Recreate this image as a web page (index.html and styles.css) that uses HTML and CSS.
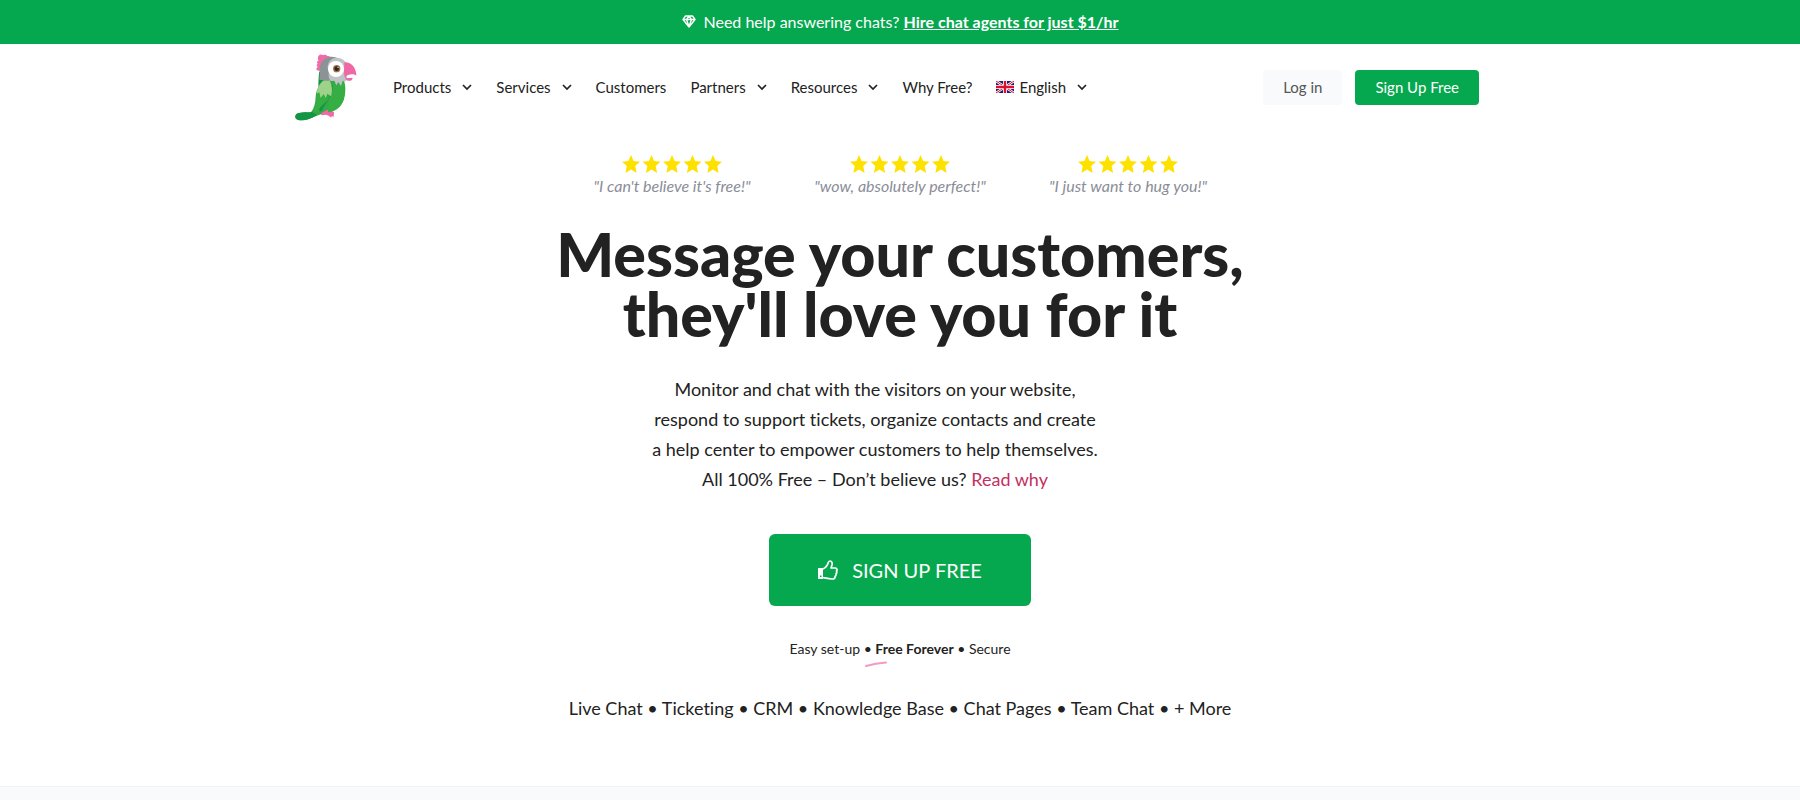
FILE: index.html
```html
<!DOCTYPE html>
<html lang="en">
<head>
  <meta charset="UTF-8">
  <meta name="viewport" content="width=device-width, initial-scale=1.0">
  <title>Message your customers, they'll love you for it</title>
  <link rel="stylesheet" href="styles.css">
</head>
<body>

  <!-- shared shapes -->
  <svg class="sprite" aria-hidden="true">
    <symbol id="chevron" viewBox="0 0 10 8">
      <path d="M1 2l4 4 4-4" fill="none" stroke="#222" stroke-width="1.7"/>
    </symbol>
    <symbol id="stars" viewBox="0 0 100 18">
      <path id="star" fill="#ffe100" d="M9 0l2.6 6 6.4.7-4.8 4.3L14.600 18 9 14.500 3.400 18l1.400-7L0 6.700 6.400 6z"/>
      <use href="#star" x="20.500"/>
      <use href="#star" x="41"/>
      <use href="#star" x="61.500"/>
      <use href="#star" x="82"/>
    </symbol>
  </svg>

  <div class="banner">
    <svg class="gem" viewBox="0 0 14 13" aria-hidden="true">
      <path d="M3.500 1h7L13 4.500 7 12 1 4.500zM1 4.500h12M4.500 4.500L7 11.500l2.500-7L7 1.200z" fill="none" stroke="#fff" stroke-width="1.400" stroke-linejoin="round"/>
    </svg>
    <p>Need help answering chats? <a href="#">Hire chat agents for just $1/hr</a></p>
  </div>

  <header class="header">
    <a href="#" class="logo" aria-label="Home">
      <svg viewBox="42 38 192 204" aria-hidden="true">
        <path fill="#f06ba8" d="M122 92c-6-1-13-1-13-6 0-4 4-4 4-7-4-1-4-7 0-9-4-3-2-9 3-9-4-5-3-16 4-18 5-1 6 2 10 1 5-2 9-1 12 3 5-1 9 1 10 6l-6 12-18 22z"/>
        <path fill="#149447" d="M118 92l20 30-22 26c-2-20 0-40 2-56z"/>
        <path fill="#35a943" d="M150 120c-24 2-42 22-43 50-1 20-5 35-14 46-12 2-36-2-45 8-6 8 1 15 12 16 20 1 33-6 48-13 35-12 74-19 84-51 6-20 5-44-1-56z"/>
        <path fill="#149447" d="M50 220c11-6 35-3 45-5l17 9c-15 9-34 17-53 16-11-1-18-12-9-20z"/>
        <path fill="#ee6aa6" d="M124 218l18-10 14 4 6 4-1 14-6-3-1 5-8-6-8-3-14 2z"/>
        <path fill="#35ae43" d="M152 132l36-12c8 22 9 54-4 73-9 14-24 21-40 23z"/>
        <path fill="#149447" d="M158 134c2 36-22 50-34 80l-8-6c8-26 24-44 28-74z"/>
        <path fill="#35ae43" d="M136 140c18 12 16 28 5 42-9 9-20 15-26 30l-15 5c12-25 9-50 17-67z"/>
        <path fill="#9ed18a" d="M132 120c-12 8-20 20-22 40l8-4 4 17 9-12 6 12 5-13 11 8c6-16 3-36-5-48z"/>
        <path fill="#8c9394" d="M148 50c-22 4-32 24-28 46l-2 22 26 4 14-6 18-60c-8-6-18-8-28-6z"/>
        <path fill="#bfc3c5" d="M160 54c18-6 36 4 40 20l1 44-7 7-6-4-5 16-8-12-6 10-6-14-8 1c-10-4-10-20-8-28-8-12-4-32 13-40z"/>
        <path fill="#ef67a5" d="M193 66c20-2 36 16 36 40-8-6-18-5-27-1l-6 5 4 4 18-2c-1 8-6 10-14 9-9-1-11-14-12-26z"/>
        <circle cx="168" cy="86" r="24" fill="#fff"/>
        <circle cx="170" cy="85" r="11" fill="#a5704c"/>
        <circle cx="170" cy="85" r="7" fill="#302421"/>
        <circle cx="174" cy="81" r="2" fill="#fff"/>
      </svg>
    </a>

    <nav class="nav">
      <a href="#">Products <svg class="chevron"><use href="#chevron"/></svg></a>
      <a href="#">Services <svg class="chevron"><use href="#chevron"/></svg></a>
      <a href="#">Customers</a>
      <a href="#">Partners <svg class="chevron"><use href="#chevron"/></svg></a>
      <a href="#">Resources <svg class="chevron"><use href="#chevron"/></svg></a>
      <a href="#">Why Free?</a>
      <a href="#">
        <svg class="flag" viewBox="0 0 18 12" aria-hidden="true">
          <path fill="#1b1f7d" d="M0 0h18v12H0z"/>
          <path stroke="#fff" stroke-width="2.400" d="M0 0l18 12M18 0L0 12"/>
          <path stroke="#d8102e" stroke-width="1" d="M0 0l18 12M18 0L0 12"/>
          <path stroke="#fff" stroke-width="4" d="M9 0v12M0 6h18"/>
          <path stroke="#d8102e" stroke-width="2.400" d="M9 0v12M0 6h18"/>
        </svg>
        English <svg class="chevron"><use href="#chevron"/></svg>
      </a>
    </nav>

    <div class="account">
      <a href="#" class="btn btn-light">Log in</a>
      <a href="#" class="btn btn-green">Sign Up Free</a>
    </div>
  </header>

  <main class="hero">
    <div class="reviews">
      <div class="review">
        <svg class="stars" role="img" aria-label="5 stars"><use href="#stars"/></svg>
        <em>"I can't believe it's free!"</em>
      </div>
      <div class="review">
        <svg class="stars" role="img" aria-label="5 stars"><use href="#stars"/></svg>
        <em>"wow, absolutely perfect!"</em>
      </div>
      <div class="review">
        <svg class="stars" role="img" aria-label="5 stars"><use href="#stars"/></svg>
        <em>"I just want to hug you!"</em>
      </div>
    </div>

    <h1>Message your customers,<br>they'll love you for it</h1>

    <p class="intro">
      Monitor and chat with the visitors on your website,<br>
      respond to support tickets, organize contacts and create<br>
      a help center to empower customers to help themselves.<br>
      All 100% Free – Don’t believe us? <a href="#">Read why</a>
    </p>

    <a href="#" class="signup">
      <svg class="thumb" viewBox="0 0 20 20" aria-hidden="true">
        <path fill="#fff" fill-rule="evenodd" d="M0 8h5v11H0zM2 15.500v1.500h1.500v-1.500z"/>
        <path d="M5 9c3-1 3.500-3 4.500-4.500C10.300 3.200 10 1 12 1s2.500 2 2 4l-1 3h4c1.800 0 2.500 1.500 1.500 3 .5 1 .3 2-.5 2.800.2 1-.1 2-.9 2.700 0 1.700-.6 2.500-2.600 2.500-4 0-6-.7-9.500-1.500" fill="none" stroke="#fff" stroke-width="1.700" stroke-linejoin="round"/>
      </svg>
      SIGN UP FREE
    </a>

    <p class="perks">Easy set-up • <strong>Free Forever</strong> • Secure
      <svg class="swoosh" viewBox="0 0 22 6" aria-hidden="true">
        <path d="M1 5C8 3 14 2 21 1.500" fill="none" stroke="#f29bc1" stroke-width="2" stroke-linecap="round"/>
      </svg>
    </p>

    <p class="features">Live Chat • Ticketing • CRM • Knowledge Base • Chat Pages • Team Chat • + More</p>
  </main>

  <section class="next"></section>

</body>
</html>
```
FILE: styles.css
```css
* {
  box-sizing: border-box;
}

body {
  margin: 0;
  font-family: Lato, "Liberation Sans", sans-serif;
  font-variant-ligatures: none;
  color: #222;
  background-color: #fff;
  min-height: 100vh;
  display: flex;
  flex-direction: column;
}

a {
  color: inherit;
  text-decoration: none;
}

p {
  margin: 0;
}

.sprite {
  display: none;
}

/* top bar */
.banner {
  display: flex;
  align-items: center;
  justify-content: center;
  gap: 8px;
  height: 44px;
  padding-bottom: 2px;
  background-color: #05a84e;
  color: #fff;
  font-size: 16px;
}

.banner a {
  font-weight: bold;
  text-decoration: underline;
}

.gem {
  width: 14px;
  height: 13px;
}

/* header */
.header {
  display: flex;
  align-items: center;
  width: 100%;
  max-width: 1240px;
  height: 86px;
  margin: 0 auto;
  padding: 0 41px 0 14px;
}

.logo {
  display: flex;
  margin-right: 35px;
}

.logo svg {
  width: 64px;
  height: 68px;
}

.nav {
  display: flex;
  gap: 24px;
  font-size: 15px;
}

.nav a {
  display: flex;
  align-items: center;
}

.chevron {
  width: 10px;
  height: 8px;
  margin-left: 11px;
}

.flag {
  width: 18px;
  height: 12px;
  margin-right: 5px;
}

.account {
  display: flex;
  gap: 13px;
  margin-left: auto;
}

.btn {
  padding: 0 20px;
  border-radius: 4px;
  font-size: 15px;
  line-height: 35px;
}

.btn-light {
  background-color: #f8fafc;
  color: #555;
}

.btn-green {
  background-color: #05a84e;
  color: #fff;
}

/* hero */
.hero {
  display: flex;
  flex-direction: column;
  align-items: center;
  padding: 25px 20px 63px;
  text-align: center;
}

.reviews {
  display: grid;
  grid-template-columns: repeat(3, 228px);
}

.review {
  display: flex;
  flex-direction: column;
  align-items: center;
  color: #8a8d98;
  font-size: 16px;
  line-height: 26px;
}

.stars {
  width: 100px;
  height: 18px;
}

h1 {
  margin: 25px 0 0;
  font-size: 61px;
  font-weight: 900;
  line-height: 60px;
}

.intro {
  margin: 30px 50px 0 0;
  font-size: 18px;
  line-height: 30px;
}

.intro a {
  color: #c2305f;
}

.signup {
  display: flex;
  align-items: center;
  gap: 14px;
  height: 72px;
  margin-top: 40px;
  padding: 0 49px;
  border-radius: 6px;
  background-color: #05a84e;
  color: #fff;
  font-size: 20px;
}

.thumb {
  width: 20px;
  height: 20px;
}

.perks {
  position: relative;
  margin-top: 33px;
  font-size: 14px;
  line-height: 20px;
}

.swoosh {
  position: absolute;
  left: 76px;
  top: 22px;
  width: 22px;
  height: 6px;
}

.features {
  margin-top: 34px;
  font-size: 18px;
  line-height: 30px;
}

.next {
  flex: 1;
  border-top: 1px solid #f0f2f5;
  background-color: #f8fafc;
}
```
